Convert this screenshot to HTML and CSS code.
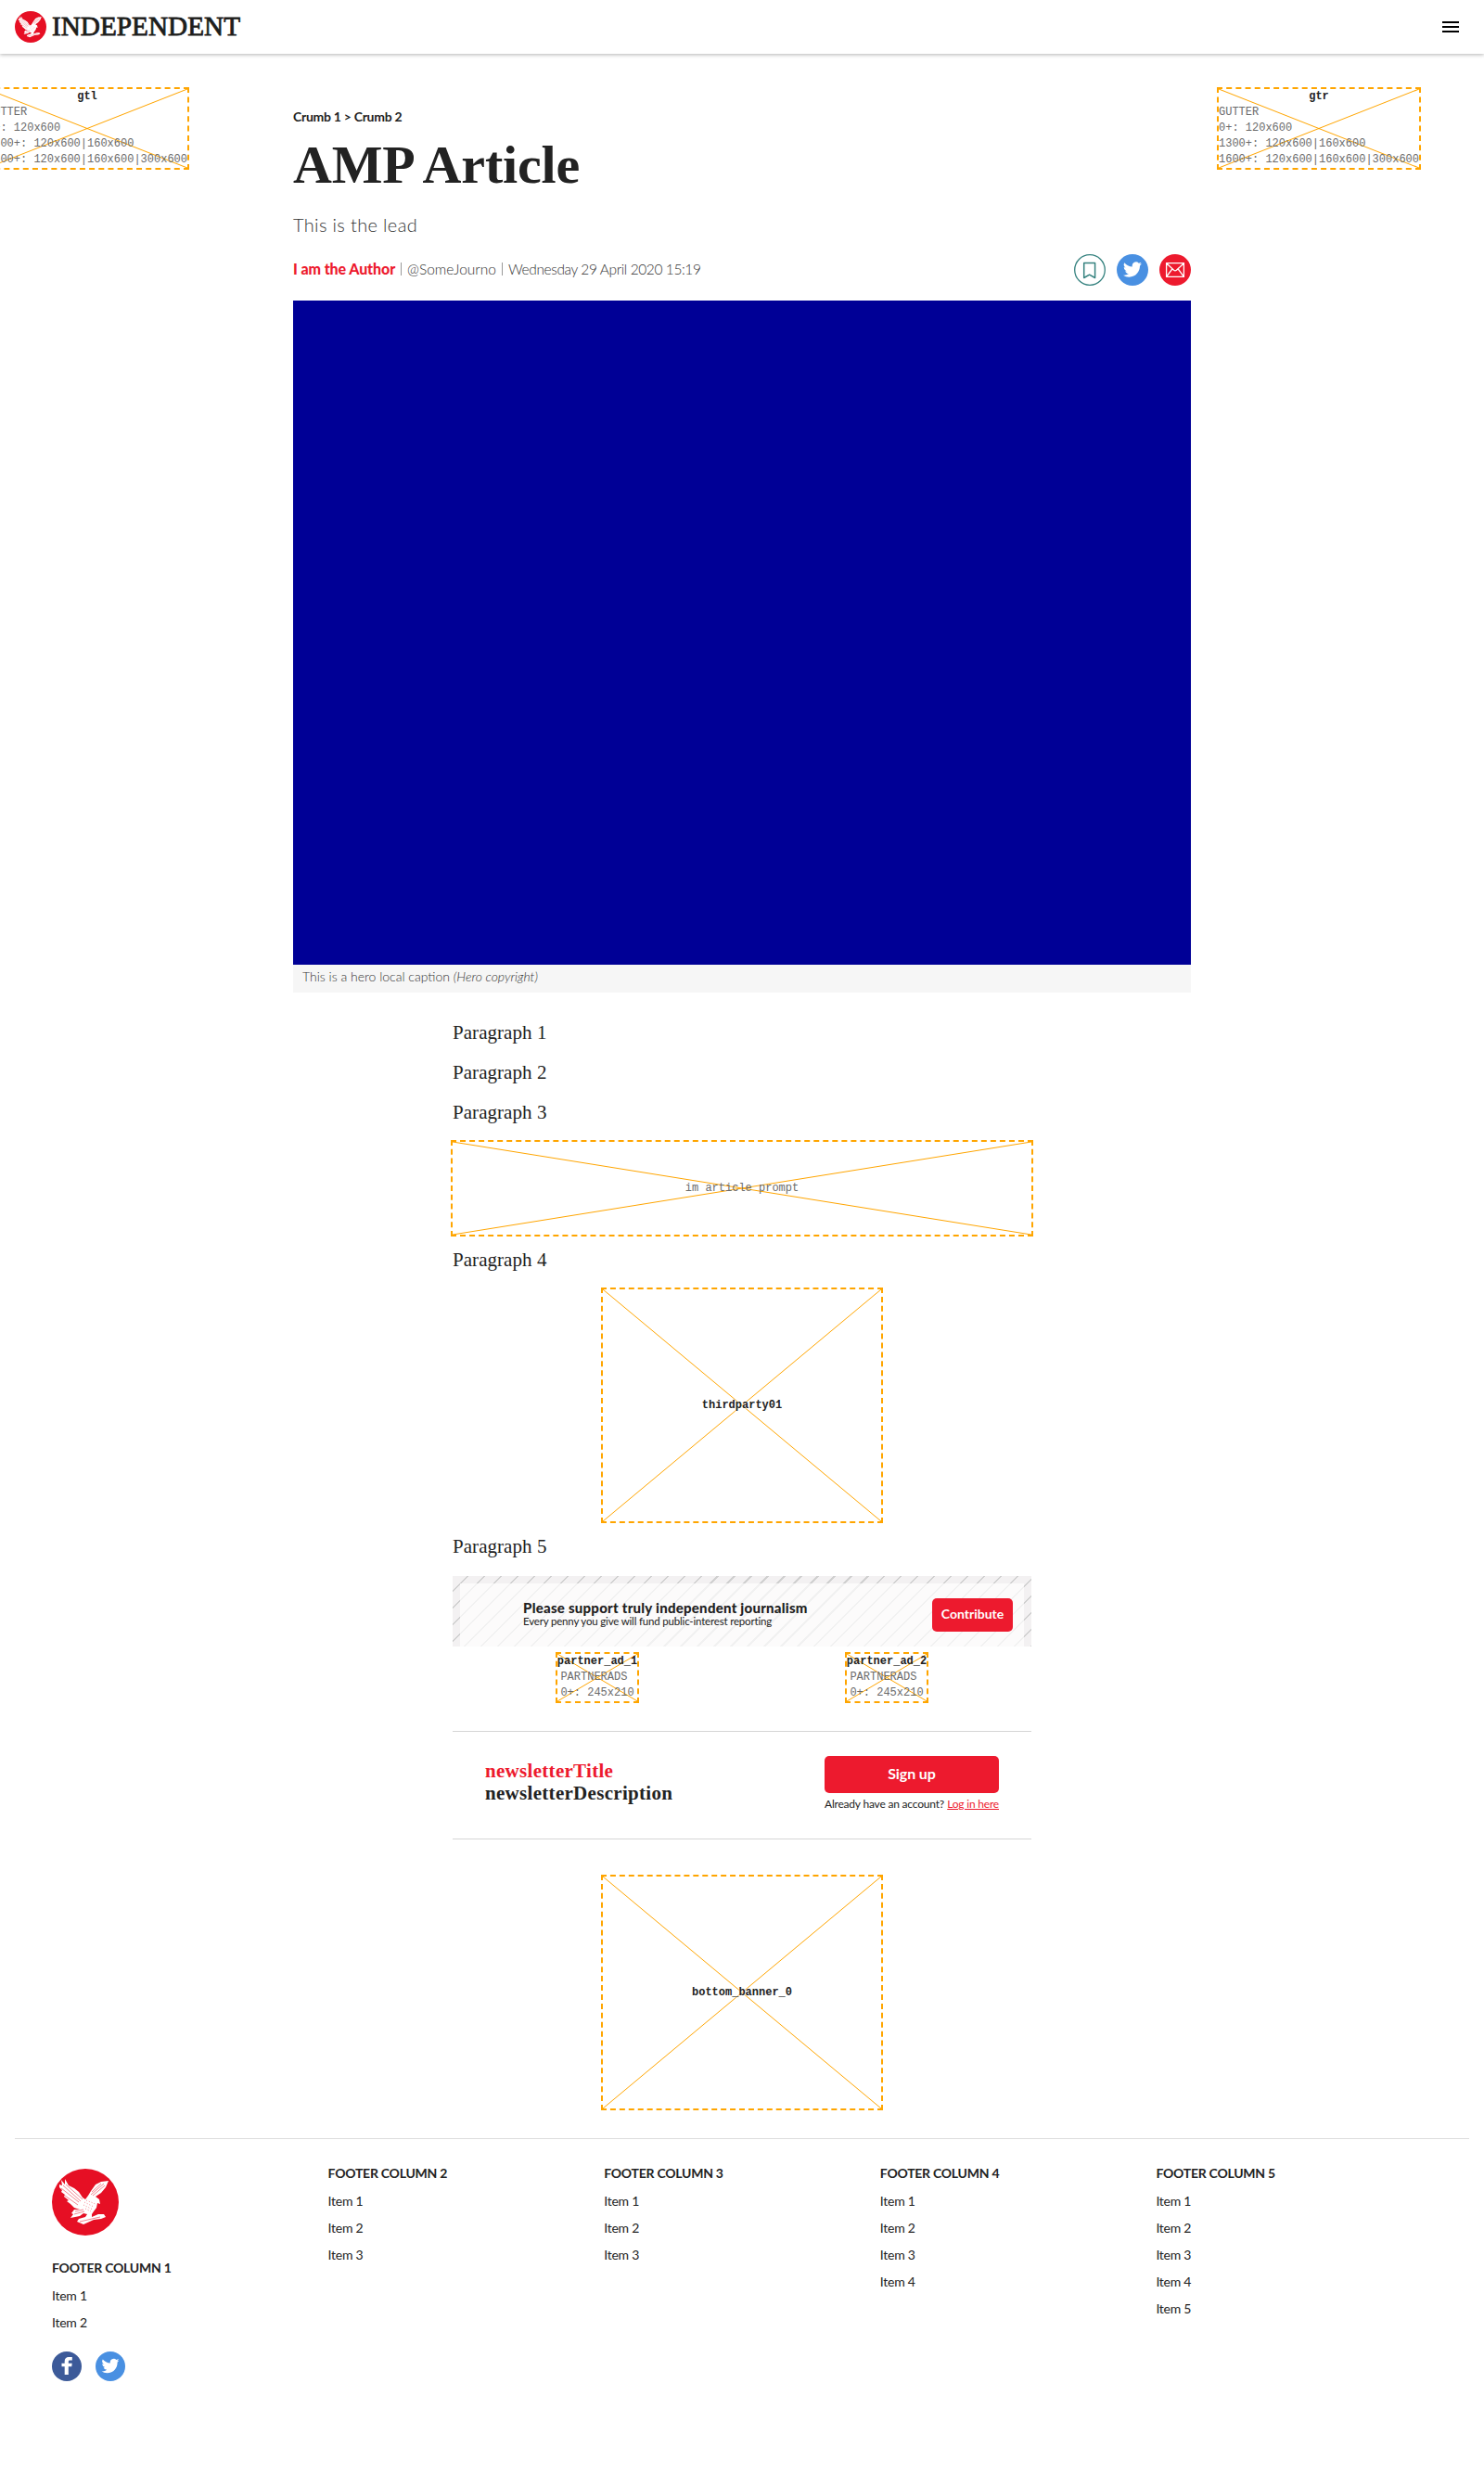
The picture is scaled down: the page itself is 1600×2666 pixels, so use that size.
FILE: index.html
```html
<!DOCTYPE html>
<html lang="en">
<head>
<meta charset="utf-8">
<title>AMP Article | Independent</title>
<link rel="stylesheet" href="styles.css">
</head>
<body>
<svg width="0" height="0" class="defs" aria-hidden="true">
  <symbol id="eagle" viewBox="0 0 72 72">
    <circle cx="36" cy="36" r="36" fill="#e60f24"/>
    <path fill="#fff" d="M8 17L11 18L10 12L14 17L14 11L18 18L24 21L29 25L33 31L36 33L39 29L42 24L47 17L53 14L61 13L58 20L53 26L47 30L51 33L52 38L49 37L48 42L45 46L43 49L43 52L50 49L56 49L58 52L53 54L45 55L34 60L27 57L29 54L36 52L38 49L34 48L30 51L20 53L23 49L21 48L24 44L30 44L24 42L20 38L16 35L18 34L13 30L14 28L10 25L11 23L8 20Z"/>
    <g fill="none" stroke="#e60f24" stroke-width=".5">
      <path d="M12 18L31 35M10 21L29 36M15 17L33 33M14 29L28 39M42 28L56 16M44 29L57 18M43 25L53 16M25 46L34 44M24 49L35 46M30 57L52 52"/>
      <path stroke-dasharray="1 2" d="M35 36L45 41M34 39L44 44M37 34L47 38M36 43L42 46"/>
    </g>
  </symbol>
  <symbol id="bird" viewBox="0 0 24 24">
    <path fill="#fff" d="M23.95 4.57a10 10 0 0 1-2.82.77 4.96 4.96 0 0 0 2.16-2.72c-.95.55-2 .96-3.13 1.18a4.92 4.92 0 0 0-8.38 4.48C7.69 8.1 4.07 6.13 1.64 3.16a4.92 4.92 0 0 0 1.52 6.57 4.9 4.9 0 0 1-2.23-.61v.06c0 2.38 1.7 4.37 3.95 4.82a5 5 0 0 1-2.21.09 4.94 4.94 0 0 0 4.6 3.42A9.87 9.87 0 0 1 0 19.54a13.99 13.99 0 0 0 7.55 2.21c9.05 0 14-7.5 14-13.98 0-.21 0-.42-.02-.63a9.94 9.94 0 0 0 2.42-2.57z"/>
  </symbol>
</svg>

<header class="site-header">
  <a class="brand">
    <svg width="34" height="34"><use href="#eagle"/></svg>
    <svg width="204" height="24" class="wordmark"><text x="0" y="20.500" textLength="203" lengthAdjust="spacingAndGlyphs">INDEPENDENT</text></svg>
  </a>
  <svg class="burger" width="18" height="12"><path d="M0 1h18M0 6h18M0 11h18" stroke="#000" stroke-width="2"/></svg>
</header>

<aside class="ad gutter gutter-left">
  <svg class="cross" preserveAspectRatio="none" viewBox="0 0 100 100"><path d="M0 0L100 100M100 0L0 100"/></svg>
  <b>gtl</b>
  <p>GUTTER<br>0+: 120x600<br>1300+: 120x600|160x600<br>1600+: 120x600|160x600|300x600</p>
</aside>
<aside class="ad gutter gutter-right">
  <svg class="cross" preserveAspectRatio="none" viewBox="0 0 100 100"><path d="M0 0L100 100M100 0L0 100"/></svg>
  <b>gtr</b>
  <p>GUTTER<br>0+: 120x600<br>1300+: 120x600|160x600<br>1600+: 120x600|160x600|300x600</p>
</aside>

<main class="article">
  <nav class="crumbs">Crumb 1 &gt; Crumb 2</nav>
  <h1>AMP Article</h1>
  <p class="lead">This is the lead</p>
  <div class="meta">
    <div class="byline"><b>I am the Author</b><i></i><span class="handle">@SomeJourno</span><i></i><span class="date">Wednesday 29 April 2020 15:19</span></div>
    <div class="share">
      <svg width="34" height="34"><g fill="none" stroke="#35827f"><circle cx="17" cy="17" r="16.3" stroke-width="1.3"/><path stroke-width="1.5" stroke-linejoin="round" d="M10.7 9.5h11.9v16l-6-3.3-5.9 3.3z"/></g></svg>
      <svg width="34" height="34"><circle cx="17" cy="17" r="17" fill="#4990e2"/><use href="#bird" x="7" y="6.500" width="20" height="20"/></svg>
      <svg width="34" height="34"><circle cx="17" cy="17" r="17" fill="#ed1a2e"/><path fill="none" stroke="#fff" stroke-width="1.3" d="M7.6 9.7h18.8v14.6H7.6zM7.6 9.7l8 7.6q1.4 1.2 2.8 0l8-7.6M7.6 24.3l6.2-8.3M26.4 24.3L20.200 16"/></svg>
    </div>
  </div>
  <div class="hero"></div>
  <p class="caption">This is a hero local caption <em>(Hero copyright)</em></p>

  <div class="body">
    <p>Paragraph 1</p>
    <p>Paragraph 2</p>
    <p>Paragraph 3</p>
    <div class="ad prompt">
      <svg class="cross" preserveAspectRatio="none" viewBox="0 0 100 100"><path d="M0 0L100 100M100 0L0 100"/></svg>
      <span>im article prompt</span>
    </div>
    <p>Paragraph 4</p>
    <div class="ad mpu">
      <svg class="cross" preserveAspectRatio="none" viewBox="0 0 100 100"><path d="M0 0L100 100M100 0L0 100"/></svg>
      <b>thirdparty01</b>
    </div>
    <p>Paragraph 5</p>
    <section class="support">
      <div class="support-inner">
        <div>
          <strong>Please support truly independent journalism</strong>
          <small>Every penny you give will fund public-interest reporting</small>
        </div>
        <a class="button contribute">Contribute</a>
      </div>
    </section>
    <div class="partners">
      <div class="ad">
        <svg class="cross" preserveAspectRatio="none" viewBox="0 0 100 100"><path d="M0 0L100 100M100 0L0 100"/></svg>
        <b>partner_ad_1</b>
        <p>PARTNERADS<br>0+: 245x210</p>
      </div>
      <div class="ad">
        <svg class="cross" preserveAspectRatio="none" viewBox="0 0 100 100"><path d="M0 0L100 100M100 0L0 100"/></svg>
        <b>partner_ad_2</b>
        <p>PARTNERADS<br>0+: 245x210</p>
      </div>
    </div>
    <section class="newsletter">
      <h2><span>newsletterTitle</span><br>newsletterDescription</h2>
      <div class="signup">
        <a class="button">Sign up</a>
        <small><span>Already have an account?</span><a>Log in here</a></small>
      </div>
    </section>
    <div class="ad mpu banner">
      <svg class="cross" preserveAspectRatio="none" viewBox="0 0 100 100"><path d="M0 0L100 100M100 0L0 100"/></svg>
      <b>bottom_banner_0</b>
    </div>
  </div>
</main>

<footer class="site-footer">
  <div>
    <svg class="crest" width="72" height="72"><use href="#eagle"/></svg>
    <h3>FOOTER COLUMN 1</h3>
    <ul><li>Item 1</li><li>Item 2</li></ul>
    <div class="social">
      <svg width="32" height="32"><circle cx="16" cy="16" r="16" fill="#3c5a99"/><path fill="#fff" d="M13.700 25v-8.700h-3.200v-3.600h3.200v-2.200c0-3 1.700-4.500 4.300-4.500h3.800v3.500h-2.300c-1.400 0-1.700.6-1.700 1.700v1.500h3.900l-.4 3.600h-3.500V25z"/></svg>
      <svg width="32" height="32"><circle cx="16" cy="16" r="16" fill="#4990e2"/><use href="#bird" x="6.500" y="6" width="19" height="19"/></svg>
    </div>
  </div>
  <div><h3>FOOTER COLUMN 2</h3><ul><li>Item 1</li><li>Item 2</li><li>Item 3</li></ul></div>
  <div><h3>FOOTER COLUMN 3</h3><ul><li>Item 1</li><li>Item 2</li><li>Item 3</li></ul></div>
  <div><h3>FOOTER COLUMN 4</h3><ul><li>Item 1</li><li>Item 2</li><li>Item 3</li><li>Item 4</li></ul></div>
  <div><h3>FOOTER COLUMN 5</h3><ul><li>Item 1</li><li>Item 2</li><li>Item 3</li><li>Item 4</li><li>Item 5</li></ul></div>
</footer>
</body>
</html>
```
FILE: styles.css
```css
* { box-sizing: border-box; margin: 0; padding: 0; }
body { color: #222; background: #fff; font-family: Lato, "Open Sans", sans-serif; min-height: 2666px; overflow-x: hidden; position: relative; }
svg { display: block; }
.defs { position: absolute; }

.site-header { height: 58px; padding: 0 27px 0 16px; display: flex; align-items: center; justify-content: space-between; box-shadow: 0 1px 4px rgba(0, 0, 0, .3); }
.brand { display: flex; align-items: center; gap: 6px; }
.wordmark { overflow: visible; font: 29px "Liberation Serif", serif; fill: #1d1d1b; stroke: #1d1d1b; stroke-width: .8px; }

.ad { position: relative; display: flex; flex-direction: column; align-items: center; border: 2px dashed orange; font: 12px/17px "Liberation Mono", monospace; color: #222; white-space: nowrap; }
.ad p, .ad span { font: inherit; letter-spacing: 0; color: #6b6b6b; position: relative; }
.ad b { position: relative; }
.cross { position: absolute; inset: 0; width: 100%; height: 100%; }
.cross path { stroke: orange; stroke-width: 1px; vector-effect: non-scaling-stroke; fill: none; }
.gutter { position: absolute; top: 94px; width: 220px; height: 89px; }
.gutter-left { left: -16px; }
.gutter-right { left: 1312px; }

.article { width: 968px; margin: 0 auto; padding-top: 58px; }
.crumbs { font-size: 14px; font-weight: 700; line-height: 20px; height: 20px; letter-spacing: -.28px; }
h1 { font: 700 58px/64px "Liberation Serif", serif; letter-spacing: -.15px; margin-top: 10px; }
.lead { font-size: 20px; line-height: 28px; margin-top: 18px; letter-spacing: .35px; color: #333; font-weight: 300; }
.meta { display: flex; justify-content: space-between; align-items: center; height: 34px; margin-top: 18px; }
.byline { display: flex; align-items: center; font-size: 15.500px; color: #333; white-space: nowrap; font-weight: 300; margin-top: -3px; }
.byline b { color: #ed1a2e; font-weight: 900; font-size: 16px; letter-spacing: -.1px; }
.byline i { width: 1px; height: 14px; background: #999; margin: 0 6px; }
.date { letter-spacing: -.4px; }
.share { display: flex; gap: 12px; }
.hero { height: 716px; background: #000096; margin-top: 16px; }
.caption { height: 30px; background: #f6f6f6; padding-left: 10px; font-size: 14px; line-height: 26px; color: #333; font-weight: 300; }

.body { width: 624px; margin: 30px auto 0; }
.body > p { font: 21px/27px "Liberation Serif", serif; letter-spacing: .05px; margin-bottom: 16px; }
.prompt { width: 628px; height: 104px; margin: 0 -2px 12px; justify-content: center; }
.mpu { width: 304px; height: 254px; margin: 0 auto 12px; justify-content: center; }
.mpu b { text-shadow: 0 0 2px #fff, 0 0 2px #fff; }
.support { height: 76px; margin-top: 18px; padding: 8px 8px 0; background: repeating-linear-gradient(135deg, #f3f1f2 0 11px, #d0d0d0 11px 12.700px); }
.support-inner { height: 68px; background: rgba(255, 255, 255, .7); padding: 8px 12px 0 68px; display: flex; justify-content: space-between; }
.support strong { display: block; font-size: 15px; font-weight: 900; line-height: 17px; margin-top: 10px; white-space: nowrap; letter-spacing: .25px; }
.support small { display: block; font-size: 11.500px; line-height: 12px; white-space: nowrap; letter-spacing: -.18px; }
.button { display: block; background: #ed1a2e; color: #fff; font-weight: 700; text-align: center; border-radius: 5px; }
.contribute { width: 87px; height: 36px; margin-top: 8px; font-size: 14px; line-height: 33px; }
.partners { display: grid; grid-template-columns: 1fr 1fr; justify-items: center; margin-top: 6px; }
.newsletter { height: 117px; margin-top: 30px; padding: 26px 35px 0; border: solid #d6d6d6; border-width: 1px 0; display: flex; justify-content: space-between; }
h2 { font: 700 21px/24px "Liberation Serif", serif; margin-top: 4px; letter-spacing: .3px; }
h2 span { color: #ed1a2e; }
.signup { width: 188px; }
.signup .button { height: 40px; font-size: 16px; line-height: 38px; letter-spacing: -.1px; }
.signup small { display: flex; justify-content: space-between; font-size: 12px; line-height: 14px; margin-top: 5px; white-space: nowrap; letter-spacing: -.2px; }
.signup small a { color: #ed1a2e; text-decoration: underline; }
.banner { margin: 38px auto 0; }

.site-footer { margin: 30px 16px 0; border-top: 1px solid #ddd; padding: 32px 40px 0; display: grid; grid-template-columns: repeat(5, 1fr); font-size: 14px; }
.crest { margin-bottom: 25px; }
h3 { font-size: 14px; line-height: 20px; height: 20px; margin-top: -5px; white-space: nowrap; letter-spacing: -.25px; }
.crest + h3 { margin-top: 0; }
ul { list-style: none; padding-top: 5px; }
li { line-height: 29px; letter-spacing: -.25px; }
.social { display: flex; gap: 15px; margin-top: 17px; }
```
